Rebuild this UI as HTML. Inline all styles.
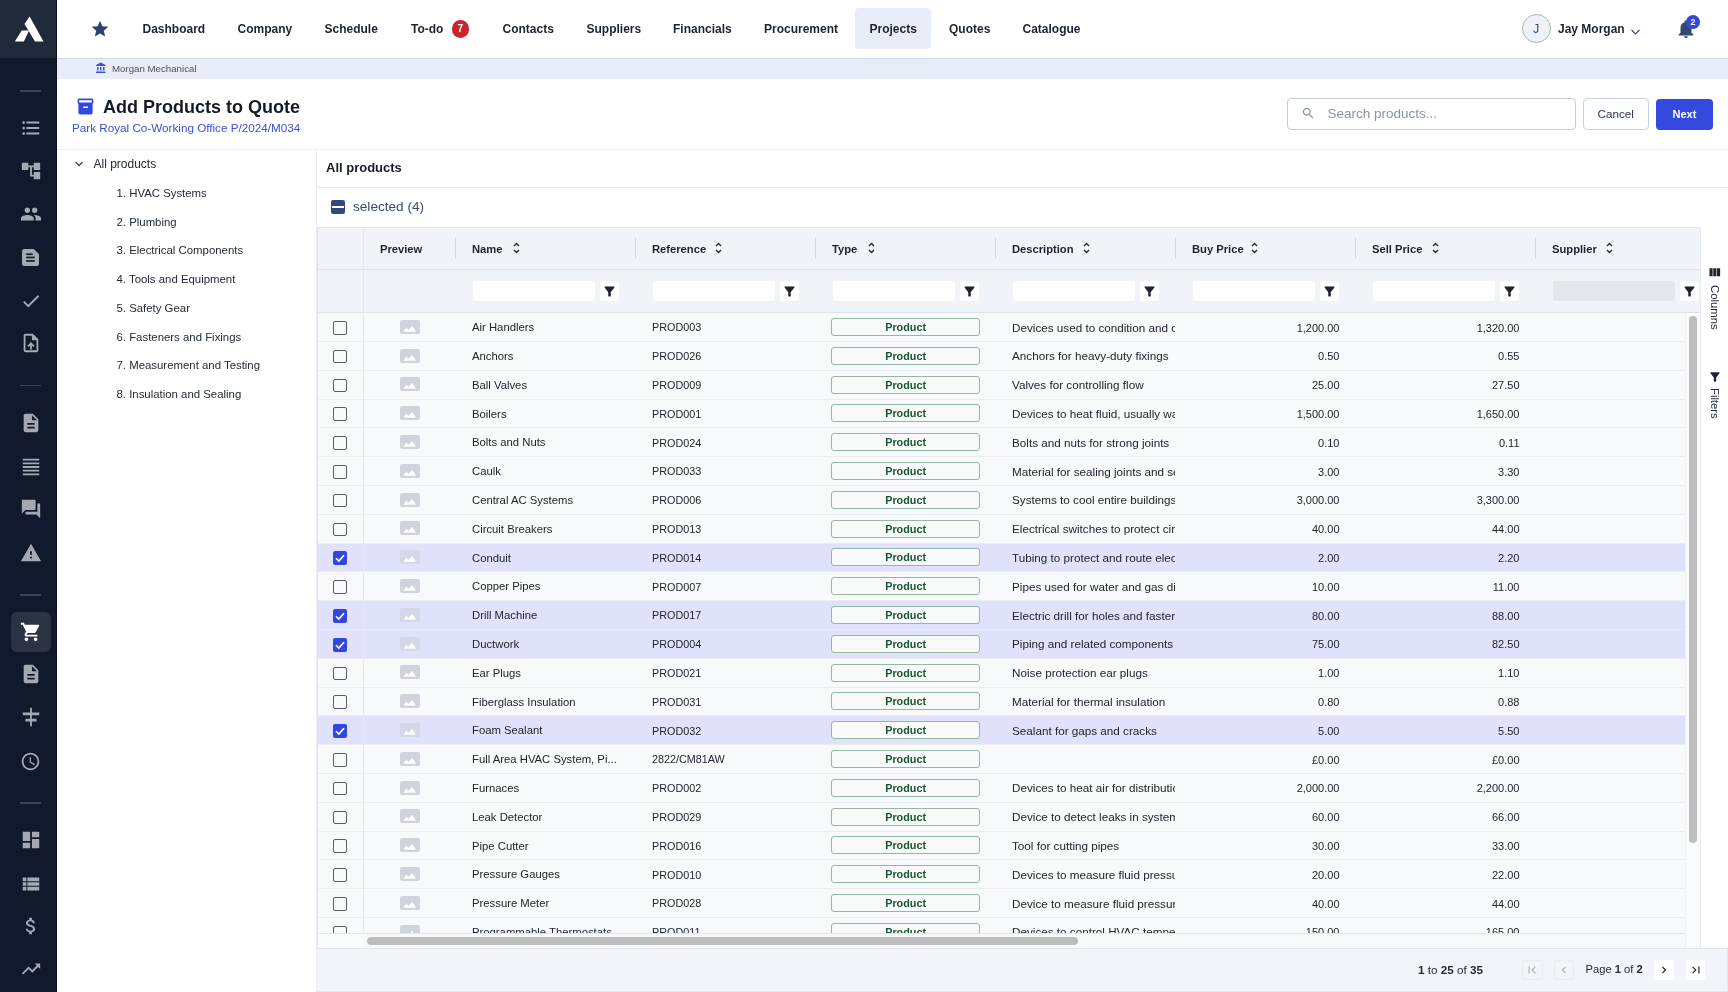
<!DOCTYPE html><html><head><meta charset="utf-8"><style>
*{box-sizing:border-box;margin:0;padding:0}
html,body{width:1728px;height:992px;overflow:hidden;background:#fff;font-family:"Liberation Sans", sans-serif;color:#1f2733}
body{will-change:transform}
.abs{position:absolute}
.t{position:absolute;white-space:nowrap;line-height:1}
</style></head><body>
<div class="abs" style="left:0;top:0;width:57px;height:992px;background:#111a2d"></div>
<div class="abs" style="left:0;top:0;width:57px;height:57.8px;background:#212a3a"></div>
<div class="abs" style="left:56px;top:0;width:1px;height:992px;background:#0a0f1c"></div>
<svg class="abs" style="left:0;top:0" width="57" height="57" viewBox="0 0 57 57"><path fill="#fff" d="M29.6 16.6 L43.5 41.6 L35 41.6 L24.5 23.9 Z"/><path fill="#fff" d="M21.7 30.4 L29 30.4 L23.9 41.6 L14.8 41.6 Z"/></svg>
<div class="abs" style="left:20px;top:90px;width:21px;height:1.5px;background:#3a4254"></div>
<svg style="position:absolute;left:19.6px;top:116.5px" width="22" height="22" viewBox="0 0 24 24"><path fill="#a3a8b2" d="M4 10.5c-.83 0-1.5.67-1.5 1.5s.67 1.5 1.5 1.5 1.5-.67 1.5-1.5-.67-1.5-1.5-1.5zm0-6c-.83 0-1.5.67-1.5 1.5S3.17 7.5 4 7.5 5.5 6.83 5.5 6 4.83 4.5 4 4.5zm0 12c-.83 0-1.5.68-1.5 1.5s.68 1.5 1.5 1.5 1.5-.68 1.5-1.5-.67-1.5-1.5-1.5zM7 19h14v-2H7v2zm0-6h14v-2H7v2zm0-8v2h14V5H7z"/></svg>
<svg style="position:absolute;left:19.6px;top:159.5px" width="22" height="22" viewBox="0 0 24 24"><path fill="#a3a8b2" d="M22 11V3h-7v3H9V3H2v8h7V8h2v10h4v3h7v-8h-7v3h-2V8h2v3z"/></svg>
<svg style="position:absolute;left:19.6px;top:203.0px" width="22" height="22" viewBox="0 0 24 24"><path fill="#a3a8b2" d="M16 11c1.66 0 2.99-1.34 2.99-3S17.66 5 16 5c-1.66 0-3 1.34-3 3s1.34 3 3 3zm-8 0c1.66 0 2.99-1.34 2.99-3S9.66 5 8 5C6.34 5 5 6.34 5 8s1.34 3 3 3zm0 2c-2.33 0-7 1.17-7 3.5V19h14v-2.5c0-2.33-4.67-3.5-7-3.5zm8 0c-.29 0-.62.02-.97.05 1.16.84 1.97 1.97 1.97 3.45V19h6v-2.5c0-2.33-4.67-3.5-7-3.5z"/></svg>
<svg class="abs" style="left:22.2px;top:248.5px" width="17" height="17" viewBox="0 0 17 17"><path fill="#a3a8b2" d="M2.2 0 H11.8 L17 5.2 V14.8 Q17 17 14.8 17 H2.2 Q0 17 0 14.8 V2.2 Q0 0 2.2 0 Z"/><rect x="4.2" y="4.4" width="6.5" height="1.7" fill="#111a2d"/><rect x="4.2" y="7.6" width="8.6" height="1.7" fill="#111a2d"/><rect x="4.2" y="11.1" width="8.6" height="1.7" fill="#111a2d"/></svg>
<svg style="position:absolute;left:19.6px;top:289.5px" width="22" height="22" viewBox="0 0 24 24"><path fill="#a3a8b2" d="M9 16.17L4.83 12l-1.42 1.41L9 19 21 7l-1.41-1.41z"/></svg>
<svg style="position:absolute;left:19.6px;top:332.0px" width="22" height="22" viewBox="0 0 24 24"><path fill="#a3a8b2" d="M14 2H6c-1.1 0-1.99.9-1.99 2L4 20c0 1.1.89 2 1.99 2H18c1.1 0 2-.9 2-2V8l-6-6zm4 18H6V4h7v5h5v11zM8 15.01l1.41 1.41L11 14.84V19h2v-4.16l1.59 1.59L16 15.01 12.01 11z"/></svg>
<div class="abs" style="left:20px;top:384.5px;width:21px;height:1.5px;background:#3a4254"></div>
<svg style="position:absolute;left:19.6px;top:411.5px" width="22" height="22" viewBox="0 0 24 24"><path fill="#a3a8b2" d="M14 2H6c-1.1 0-1.99.9-1.99 2L4 20c0 1.1.89 2 1.99 2H18c1.1 0 2-.9 2-2V8l-6-6zm2 16H8v-2h8v2zm0-4H8v-2h8v2zm-3-5V3.5L18.5 9H13z"/></svg>
<svg style="position:absolute;left:19.6px;top:455.5px" width="22" height="22" viewBox="0 0 24 24"><path fill="#a3a8b2" d="M3 21h18v-2H3v2zm0-4h18v-2H3v2zm0-4h18v-2H3v2zm0-4h18V7H3v2zm0-6v2h18V3H3z"/></svg>
<svg style="position:absolute;left:19.6px;top:498.0px" width="22" height="22" viewBox="0 0 24 24"><path fill="#a3a8b2" d="M21 6h-2v9H6v2c0 .55.45 1 1 1h11l4 4V7c0-.55-.45-1-1-1zm-4 6V3c0-.55-.45-1-1-1H3c-.55 0-1 .45-1 1v14l4-4h10c.55 0 1-.45 1-1z"/></svg>
<svg style="position:absolute;left:19.6px;top:541.5px" width="22" height="22" viewBox="0 0 24 24"><path fill="#a3a8b2" d="M1 21h22L12 2 1 21zm12-3h-2v-2h2v2zm0-4h-2v-4h2v4z"/></svg>
<div class="abs" style="left:20px;top:594px;width:21px;height:1.5px;background:#3a4254"></div>
<div class="abs" style="left:11px;top:612px;width:39.5px;height:40px;border-radius:6px;background:#2b3344"></div>
<svg style="position:absolute;left:19.6px;top:621.0px" width="22" height="22" viewBox="0 0 24 24"><path fill="#ffffff" d="M7 18c-1.1 0-1.99.9-1.99 2S5.9 22 7 22s2-.9 2-2-.9-2-2-2zM1 2v2h2l3.6 7.59-1.35 2.45c-.16.28-.25.61-.25.96 0 1.1.9 2 2 2h12v-2H7.42c-.14 0-.25-.11-.25-.25l.03-.12.9-1.63h7.45c.75 0 1.41-.41 1.750-1.03l3.58-6.49c.08-.14.12-.31.12-.48 0-.55-.45-1-1-1H5.21l-.94-2H1zm16 16c-1.1 0-1.99.9-1.99 2s.89 2 1.99 2 2-.9 2-2-.9-2-2-2z"/></svg>
<svg style="position:absolute;left:19.6px;top:663.0px" width="22" height="22" viewBox="0 0 24 24"><path fill="#a3a8b2" d="M14 2H6c-1.1 0-1.99.9-1.99 2L4 20c0 1.1.89 2 1.99 2H18c1.1 0 2-.9 2-2V8l-6-6zm2 16H8v-2h8v2zm0-4H8v-2h8v2zm-3-5V3.5L18.5 9H13z"/></svg>
<svg style="position:absolute;left:19.6px;top:706.0px" width="22" height="22" viewBox="0 0 24 24"><path fill="#a3a8b2" d="M11 2h2v5h8v3h-8v4h5v3h-5v5h-2v-5H6v-3h5v-4H3V7h8z"/></svg>
<svg style="position:absolute;left:20.1px;top:750.5px" width="21" height="21" viewBox="0 0 24 24"><path fill="#a3a8b2" d="M11.99 2C6.47 2 2 6.48 2 12s4.47 10 9.99 10C17.52 22 22 17.52 22 12S17.52 2 11.99 2zM12 20c-4.42 0-8-3.58-8-8s3.58-8 8-8 8 3.58 8 8-3.58 8-8 8zm.5-13H11v6l5.25 3.150.75-1.23-4.5-2.67z"/></svg>
<div class="abs" style="left:20px;top:802px;width:21px;height:1.5px;background:#3a4254"></div>
<svg style="position:absolute;left:19.6px;top:829.0px" width="22" height="22" viewBox="0 0 24 24"><path fill="#a3a8b2" d="M3 13h8V3H3v10zm0 8h8v-6H3v6zm10 0h8V11h-8v10zm0-18v6h8V3h-8z"/></svg>
<svg style="position:absolute;left:19.6px;top:873.0px" width="22" height="22" viewBox="0 0 24 24"><path fill="#a3a8b2" d="M3 14h4v-4H3v4zm0 5h4v-4H3v4zM3 9h4V5H3v4zm5 5h13v-4H8v4zm0 5h13v-4H8v4zM8 5v4h13V5H8z"/></svg>
<svg style="position:absolute;left:19.6px;top:915.0px" width="22" height="22" viewBox="0 0 24 24"><path fill="#a3a8b2" d="M11.8 10.9c-2.27-.59-3-1.2-3-2.15 0-1.09 1.01-1.850 2.7-1.85 1.78 0 2.44.85 2.5 2.1h2.21c-.07-1.72-1.12-3.3-3.21-3.81V3h-3v2.16c-1.94.42-3.5 1.68-3.5 3.61 0 2.31 1.91 3.46 4.7 4.13 2.5.6 3 1.48 3 2.41 0 .69-.49 1.79-2.7 1.79-2.06 0-2.87-.92-2.98-2.1h-2.2c.12 2.19 1.76 3.42 3.68 3.83V21h3v-2.15c1.95-.37 3.5-1.5 3.5-3.55 0-2.84-2.43-3.81-4.7-4.4z"/></svg>
<svg style="position:absolute;left:19.6px;top:958.0px" width="22" height="22" viewBox="0 0 24 24"><path fill="#a3a8b2" d="M16 6l2.29 2.29-4.88 4.88-4-4L2 16.59 3.41 18l6-6 4 4 6.3-6.29L22 12V6z"/></svg>
<div class="abs" style="left:57px;top:57.8px;width:1671px;height:1px;background:#cfd5e6"></div>
<svg style="position:absolute;left:89.6px;top:18.8px" width="20" height="20" viewBox="0 0 24 24"><path fill="#2c4372" d="M12 17.27L18.18 21l-1.64-7.03L22 9.24l-7.19-.61L12 2 9.19 8.63 2 9.24l5.46 4.73L5.82 21z"/></svg>
<div class="abs" style="left:855px;top:8px;width:75.5px;height:41px;border-radius:4px;background:#e8ebf8"></div>
<div class="t" style="left:142.5px;top:22.6px;font-size:12px;font-weight:700;color:#1d2430">Dashboard</div>
<div class="t" style="left:237.5px;top:22.6px;font-size:12px;font-weight:700;color:#1d2430">Company</div>
<div class="t" style="left:324.5px;top:22.6px;font-size:12px;font-weight:700;color:#1d2430">Schedule</div>
<div class="t" style="left:411px;top:22.6px;font-size:12px;font-weight:700;color:#1d2430">To-do</div>
<div class="t" style="left:502.5px;top:22.6px;font-size:12px;font-weight:700;color:#1d2430">Contacts</div>
<div class="t" style="left:586.5px;top:22.6px;font-size:12px;font-weight:700;color:#1d2430">Suppliers</div>
<div class="t" style="left:673px;top:22.6px;font-size:12px;font-weight:700;color:#1d2430">Financials</div>
<div class="t" style="left:764px;top:22.6px;font-size:12px;font-weight:700;color:#1d2430">Procurement</div>
<div class="t" style="left:869.5px;top:22.6px;font-size:12px;font-weight:700;color:#1d2430">Projects</div>
<div class="t" style="left:949px;top:22.6px;font-size:12px;font-weight:700;color:#1d2430">Quotes</div>
<div class="t" style="left:1022.5px;top:22.6px;font-size:12px;font-weight:700;color:#1d2430">Catalogue</div>
<div class="abs" style="left:451.5px;top:20px;width:17.5px;height:17.5px;border-radius:50%;background:#c8242b;color:#fff;font-size:10px;font-weight:700;text-align:center;line-height:17.5px">7</div>
<div class="abs" style="left:1521.5px;top:14px;width:29px;height:29px;border-radius:50%;border:1px solid #9cbfa9;background:#eef1f5;color:#3a4a6a;font-size:12.5px;text-align:center;line-height:28px">J</div>
<div class="t" style="left:1558px;top:22.6px;font-size:12px;font-weight:700;color:#1d2430">Jay Morgan</div>
<svg class="abs" style="left:1629.5px;top:27.5px" width="11" height="8" viewBox="0 0 11 8"><path d="M1.5 2 L5.5 6 L9.5 2" fill="none" stroke="#34496f" stroke-width="1.1"/></svg>
<svg style="position:absolute;left:1675px;top:18.2px" width="22" height="22" viewBox="0 0 24 24"><path fill="#34496f" d="M12 22c1.1 0 2-.9 2-2h-4c0 1.1.89 2 2 2zm6-6v-5c0-3.07-1.64-5.64-4.5-6.32V4c0-.83-.67-1.5-1.5-1.5s-1.5.67-1.5 1.5v.68C7.630 5.36 6 7.92 6 11v5l-2 2v1h16v-1l-2-2z"/></svg>
<div class="abs" style="left:1686px;top:14.5px;width:14.2px;height:14.2px;border-radius:50%;background:#3247dc;color:#fff;font-size:9px;font-weight:700;text-align:center;line-height:14.2px">2</div>
<div class="abs" style="left:57px;top:58.8px;width:1671px;height:19.9px;background:#e8ebf8"></div>
<svg style="position:absolute;left:95px;top:62px" width="12" height="12" viewBox="0 0 24 24"><path fill="#3b50d8" d="M4 10v7h3v-7H4zm6 0v7h3v-7h-3zM2 22h19v-3H2v3zm14-12v7h3v-7h-3zm-4.5-9L2 6v2h19V6l-9.5-5z"/></svg>
<div class="t" style="left:112px;top:63.6px;font-size:9.7px;color:#4b5361">Morgan Mechanical</div>
<svg style="position:absolute;left:75.5px;top:97px" width="19" height="19" viewBox="0 0 24 24"><path fill="#3448d9" d="M20 2H4c-1 0-2 .9-2 2v3.01c0 .72.43 1.34 1 1.69V20c0 1.1 1.1 2 2 2h14c.9 0 2-.9 2-2V8.7c.57-.35 1-.97 1-1.69V4c0-1.1-1-2-2-2zm-5 12H9v-2h6v2zm5-7H4V4l16-.02V7z"/></svg>
<div class="t" style="left:103px;top:98.2px;font-size:18px;font-weight:700;color:#151b26">Add Products to Quote</div>
<div class="t" style="left:72px;top:121.5px;font-size:11.7px;color:#3a4fd8">Park Royal Co-Working Office P/2024/M034</div>
<div class="abs" style="left:1287px;top:98px;width:288.5px;height:32px;border:1px solid #c6ccd6;border-radius:4px;background:#fff"></div>
<svg style="position:absolute;left:1301px;top:106.3px" width="14.5" height="14.5" viewBox="0 0 24 24"><path fill="#8a93a1" d="M15.5 14h-.79l-.28-.27C15.41 12.59 16 11.11 16 9.5 16 5.91 13.09 3 9.5 3S3 5.91 3 9.5 5.91 16 9.5 16c1.61 0 3.09-.59 4.23-1.57l.27.28v.79l5 4.99L20.49 19l-4.99-5zm-6 0C7.01 14 5 11.99 5 9.5S7.01 5 9.5 5 14 7.01 14 9.5 11.99 14 9.5 14z"/></svg>
<div class="t" style="left:1327.5px;top:107px;font-size:13.5px;color:#8a93a2">Search products...</div>
<div class="abs" style="left:1582.5px;top:98px;width:66.5px;height:32px;border:1px solid #c8cfe8;border-radius:4px;background:#fff"></div>
<div class="t" style="left:1597.5px;top:107.5px;font-size:11.7px;color:#263759">Cancel</div>
<div class="abs" style="left:1656px;top:98.5px;width:57px;height:31px;border-radius:4px;background:#3549df"></div>
<div class="t" style="left:1672.5px;top:109px;font-size:11px;font-weight:700;color:#fff">Next</div>
<div class="abs" style="left:57px;top:149px;width:1671px;height:1px;background:#eceff4"></div>
<div class="abs" style="left:316px;top:150px;width:1px;height:842px;background:#eceff5"></div>
<svg class="abs" style="left:74px;top:160px" width="10" height="8" viewBox="0 0 10 8"><path d="M1.5 2 L5 5.5 L8.5 2" fill="none" stroke="#3b4454" stroke-width="1.3"/></svg>
<div class="t" style="left:93.5px;top:158.2px;font-size:12px;color:#222a36">All products</div>
<div class="t" style="left:116.5px;top:187.8px;font-size:11.4px;color:#222a36">1. HVAC Systems</div>
<div class="t" style="left:116.5px;top:216.55px;font-size:11.4px;color:#222a36">2. Plumbing</div>
<div class="t" style="left:116.5px;top:245.3px;font-size:11.4px;color:#222a36">3. Electrical Components</div>
<div class="t" style="left:116.5px;top:274.05px;font-size:11.4px;color:#222a36">4. Tools and Equipment</div>
<div class="t" style="left:116.5px;top:302.8px;font-size:11.4px;color:#222a36">5. Safety Gear</div>
<div class="t" style="left:116.5px;top:331.55px;font-size:11.4px;color:#222a36">6. Fasteners and Fixings</div>
<div class="t" style="left:116.5px;top:360.3px;font-size:11.4px;color:#222a36">7. Measurement and Testing</div>
<div class="t" style="left:116.5px;top:389.05px;font-size:11.4px;color:#222a36">8. Insulation and Sealing</div>
<div class="t" style="left:326px;top:161px;font-size:13px;font-weight:700;color:#161c27">All products</div>
<div class="abs" style="left:317px;top:187px;width:1411px;height:1px;background:#e3e7ee"></div>
<div class="abs" style="left:331px;top:200px;width:14px;height:14px;border-radius:2px;background:#33497a"></div>
<div class="abs" style="left:332.3px;top:205.8px;width:11.5px;height:2.5px;background:#fff"></div>
<div class="t" style="left:353px;top:200.3px;font-size:13.6px;color:#3a4d70">selected (4)</div>
<div class="abs" style="left:317px;top:227px;width:1383px;height:721px;background:#f0f3f8;border-top:1px solid #dfe4ec;border-left:1px solid #dfe4ec"></div>
<div class="abs" style="left:317px;top:269px;width:1383px;height:1px;background:#dfe4ec"></div>
<div class="abs" style="left:317px;top:312px;width:1383px;height:1px;background:#dfe4ec"></div>
<div class="abs" style="left:363px;top:228px;width:1px;height:705px;background:#e3e7ee"></div>
<div class="t" style="left:380px;top:243.5px;font-size:11.2px;font-weight:700;color:#1b2230">Preview</div>
<div class="t" style="left:472px;top:243.5px;font-size:11.2px;font-weight:700;color:#1b2230">Name</div>
<div class="abs" style="left:455px;top:237.5px;width:1px;height:21.5px;background:#d3d9e2"></div>
<div class="t" style="left:652px;top:243.5px;font-size:11.2px;font-weight:700;color:#1b2230">Reference</div>
<div class="abs" style="left:635px;top:237.5px;width:1px;height:21.5px;background:#d3d9e2"></div>
<div class="t" style="left:832px;top:243.5px;font-size:11.2px;font-weight:700;color:#1b2230">Type</div>
<div class="abs" style="left:815px;top:237.5px;width:1px;height:21.5px;background:#d3d9e2"></div>
<div class="t" style="left:1012px;top:243.5px;font-size:11.2px;font-weight:700;color:#1b2230">Description</div>
<div class="abs" style="left:995px;top:237.5px;width:1px;height:21.5px;background:#d3d9e2"></div>
<div class="t" style="left:1192px;top:243.5px;font-size:11.2px;font-weight:700;color:#1b2230">Buy Price</div>
<div class="abs" style="left:1175px;top:237.5px;width:1px;height:21.5px;background:#d3d9e2"></div>
<div class="t" style="left:1372px;top:243.5px;font-size:11.2px;font-weight:700;color:#1b2230">Sell Price</div>
<div class="abs" style="left:1355px;top:237.5px;width:1px;height:21.5px;background:#d3d9e2"></div>
<div class="t" style="left:1552px;top:243.5px;font-size:11.2px;font-weight:700;color:#1b2230">Supplier</div>
<div class="abs" style="left:1535px;top:237.5px;width:1px;height:21.5px;background:#d3d9e2"></div>
<svg class="abs" style="left:512.5px;top:242px" width="7" height="12" viewBox="0 0 7 12"><path d="M1 4 L3.5 1.5 L6 4 M1 8 L3.5 10.5 L6 8" fill="none" stroke="#1f2733" stroke-width="1.3"/></svg>
<svg class="abs" style="left:714.5px;top:242px" width="7" height="12" viewBox="0 0 7 12"><path d="M1 4 L3.5 1.5 L6 4 M1 8 L3.5 10.5 L6 8" fill="none" stroke="#1f2733" stroke-width="1.3"/></svg>
<svg class="abs" style="left:867.5px;top:242px" width="7" height="12" viewBox="0 0 7 12"><path d="M1 4 L3.5 1.5 L6 4 M1 8 L3.5 10.5 L6 8" fill="none" stroke="#1f2733" stroke-width="1.3"/></svg>
<svg class="abs" style="left:1082.5px;top:242px" width="7" height="12" viewBox="0 0 7 12"><path d="M1 4 L3.5 1.5 L6 4 M1 8 L3.5 10.5 L6 8" fill="none" stroke="#1f2733" stroke-width="1.3"/></svg>
<svg class="abs" style="left:1251px;top:242px" width="7" height="12" viewBox="0 0 7 12"><path d="M1 4 L3.5 1.5 L6 4 M1 8 L3.5 10.5 L6 8" fill="none" stroke="#1f2733" stroke-width="1.3"/></svg>
<svg class="abs" style="left:1431.5px;top:242px" width="7" height="12" viewBox="0 0 7 12"><path d="M1 4 L3.5 1.5 L6 4 M1 8 L3.5 10.5 L6 8" fill="none" stroke="#1f2733" stroke-width="1.3"/></svg>
<svg class="abs" style="left:1606px;top:242px" width="7" height="12" viewBox="0 0 7 12"><path d="M1 4 L3.5 1.5 L6 4 M1 8 L3.5 10.5 L6 8" fill="none" stroke="#1f2733" stroke-width="1.3"/></svg>
<div class="abs" style="left:472.5px;top:281px;width:122px;height:20px;border-radius:3px;background:#fff"></div>
<div class="abs" style="left:600px;top:281px;width:19px;height:20px;border-radius:3px;background:#fff"></div>
<svg style="position:absolute;left:602px;top:283.5px" width="15" height="15" viewBox="0 0 24 24"><path fill="#1b2230" d="M4.25 5.61C6.27 8.2 10 13 10 13v6c0 .55.45 1 1 1h2c.55 0 1-.45 1-1v-6s3.72-4.8 5.74-7.39c.51-.66.04-1.61-.79-1.61H5.04c-.83 0-1.3.95-.79 1.61z"/></svg>
<div class="abs" style="left:652.5px;top:281px;width:122px;height:20px;border-radius:3px;background:#fff"></div>
<div class="abs" style="left:780px;top:281px;width:19px;height:20px;border-radius:3px;background:#fff"></div>
<svg style="position:absolute;left:782px;top:283.5px" width="15" height="15" viewBox="0 0 24 24"><path fill="#1b2230" d="M4.25 5.61C6.27 8.2 10 13 10 13v6c0 .55.45 1 1 1h2c.55 0 1-.45 1-1v-6s3.72-4.8 5.74-7.39c.51-.66.04-1.61-.79-1.61H5.04c-.83 0-1.3.95-.79 1.61z"/></svg>
<div class="abs" style="left:832.5px;top:281px;width:122px;height:20px;border-radius:3px;background:#fff"></div>
<div class="abs" style="left:960px;top:281px;width:19px;height:20px;border-radius:3px;background:#fff"></div>
<svg style="position:absolute;left:962px;top:283.5px" width="15" height="15" viewBox="0 0 24 24"><path fill="#1b2230" d="M4.25 5.61C6.27 8.2 10 13 10 13v6c0 .55.45 1 1 1h2c.55 0 1-.45 1-1v-6s3.72-4.8 5.74-7.39c.51-.66.04-1.61-.79-1.61H5.04c-.83 0-1.3.95-.79 1.61z"/></svg>
<div class="abs" style="left:1012.5px;top:281px;width:122px;height:20px;border-radius:3px;background:#fff"></div>
<div class="abs" style="left:1140px;top:281px;width:19px;height:20px;border-radius:3px;background:#fff"></div>
<svg style="position:absolute;left:1142px;top:283.5px" width="15" height="15" viewBox="0 0 24 24"><path fill="#1b2230" d="M4.25 5.61C6.27 8.2 10 13 10 13v6c0 .55.45 1 1 1h2c.55 0 1-.45 1-1v-6s3.72-4.8 5.74-7.39c.51-.66.04-1.61-.79-1.61H5.04c-.83 0-1.3.95-.79 1.61z"/></svg>
<div class="abs" style="left:1192.5px;top:281px;width:122px;height:20px;border-radius:3px;background:#fff"></div>
<div class="abs" style="left:1320px;top:281px;width:19px;height:20px;border-radius:3px;background:#fff"></div>
<svg style="position:absolute;left:1322px;top:283.5px" width="15" height="15" viewBox="0 0 24 24"><path fill="#1b2230" d="M4.25 5.61C6.27 8.2 10 13 10 13v6c0 .55.45 1 1 1h2c.55 0 1-.45 1-1v-6s3.72-4.8 5.74-7.39c.51-.66.04-1.61-.79-1.61H5.04c-.83 0-1.3.95-.79 1.61z"/></svg>
<div class="abs" style="left:1372.5px;top:281px;width:122px;height:20px;border-radius:3px;background:#fff"></div>
<div class="abs" style="left:1500px;top:281px;width:19px;height:20px;border-radius:3px;background:#fff"></div>
<svg style="position:absolute;left:1502px;top:283.5px" width="15" height="15" viewBox="0 0 24 24"><path fill="#1b2230" d="M4.25 5.61C6.27 8.2 10 13 10 13v6c0 .55.45 1 1 1h2c.55 0 1-.45 1-1v-6s3.72-4.8 5.74-7.39c.51-.66.04-1.61-.79-1.61H5.04c-.83 0-1.3.95-.79 1.61z"/></svg>
<div class="abs" style="left:1552.5px;top:281px;width:122px;height:20px;border-radius:3px;background:#e3e6eb"></div>
<div class="abs" style="left:1680px;top:281px;width:19px;height:20px;border-radius:3px;background:#fff"></div>
<svg style="position:absolute;left:1682px;top:283.5px" width="15" height="15" viewBox="0 0 24 24"><path fill="#1b2230" d="M4.25 5.61C6.27 8.2 10 13 10 13v6c0 .55.45 1 1 1h2c.55 0 1-.45 1-1v-6s3.72-4.8 5.74-7.39c.51-.66.04-1.61-.79-1.61H5.04c-.83 0-1.3.95-.79 1.61z"/></svg>
<div class="abs" style="left:318px;top:313px;width:1367px;height:620px;overflow:hidden;background:#f7f9fb">
<div class="abs" style="left:0;top:0.19999999999998863px;width:1367px;height:28.8px;background:#f7f9fb;border-bottom:1px solid #e9ecf1"></div>
<div class="abs" style="left:15px;top:7.999999999999989px;width:13.5px;height:13.5px;border-radius:2px;border:1.8px solid #575d69;background:transparent"></div>
<svg class="abs" style="left:82px;top:6.799999999999989px" width="20" height="14" viewBox="0 0 20 14"><rect width="20" height="14" rx="2" fill="#cfd4dc"/><path d="M3.8 11.4 L6.4 7.9 L8.4 10.2 L12 6.2 L15.7 11.4 Z" fill="#fff" stroke="#fff" stroke-width="0.5" stroke-linejoin="round"/></svg>
<div class="t" style="left:154px;top:9.099999999999989px;font-size:11.3px;color:#20262f">Air Handlers</div>
<div class="t" style="left:334px;top:9.29999999999999px;font-size:10.8px;color:#20262f">PROD003</div>
<div class="abs" style="left:513.2px;top:4.999999999999989px;width:148.8px;height:18px;border:1px solid #93b9a6;border-radius:3px;background:#f8fafa;color:#1a5431;font-size:10.8px;font-weight:700;text-align:center;line-height:16.5px">Product</div>
<div class="abs" style="left:694px;top:6.599999999999989px;width:163px;height:16px;overflow:hidden"><div class="t" style="left:0;top:2.0px;font-size:11.7px;color:#20262f">Devices used to condition and circulate air</div></div>
<div class="t" style="right:345.5px;top:9.49999999999999px;font-size:11px;color:#20262f">1,200.00</div>
<div class="t" style="right:165.5px;top:9.49999999999999px;font-size:11px;color:#20262f">1,320.00</div>
<div class="abs" style="left:0;top:28.99999999999999px;width:1367px;height:28.8px;background:#f7f9fb;border-bottom:1px solid #e9ecf1"></div>
<div class="abs" style="left:15px;top:36.79999999999999px;width:13.5px;height:13.5px;border-radius:2px;border:1.8px solid #575d69;background:transparent"></div>
<svg class="abs" style="left:82px;top:35.599999999999994px" width="20" height="14" viewBox="0 0 20 14"><rect width="20" height="14" rx="2" fill="#cfd4dc"/><path d="M3.8 11.4 L6.4 7.9 L8.4 10.2 L12 6.2 L15.7 11.4 Z" fill="#fff" stroke="#fff" stroke-width="0.5" stroke-linejoin="round"/></svg>
<div class="t" style="left:154px;top:37.89999999999999px;font-size:11.3px;color:#20262f">Anchors</div>
<div class="t" style="left:334px;top:38.099999999999994px;font-size:10.8px;color:#20262f">PROD026</div>
<div class="abs" style="left:513.2px;top:33.79999999999999px;width:148.8px;height:18px;border:1px solid #93b9a6;border-radius:3px;background:#f8fafa;color:#1a5431;font-size:10.8px;font-weight:700;text-align:center;line-height:16.5px">Product</div>
<div class="abs" style="left:694px;top:35.39999999999999px;width:163px;height:16px;overflow:hidden"><div class="t" style="left:0;top:2.0px;font-size:11.7px;color:#20262f">Anchors for heavy-duty fixings</div></div>
<div class="t" style="right:345.5px;top:38.29999999999999px;font-size:11px;color:#20262f">0.50</div>
<div class="t" style="right:165.5px;top:38.29999999999999px;font-size:11px;color:#20262f">0.55</div>
<div class="abs" style="left:0;top:57.79999999999999px;width:1367px;height:28.8px;background:#f7f9fb;border-bottom:1px solid #e9ecf1"></div>
<div class="abs" style="left:15px;top:65.6px;width:13.5px;height:13.5px;border-radius:2px;border:1.8px solid #575d69;background:transparent"></div>
<svg class="abs" style="left:82px;top:64.39999999999999px" width="20" height="14" viewBox="0 0 20 14"><rect width="20" height="14" rx="2" fill="#cfd4dc"/><path d="M3.8 11.4 L6.4 7.9 L8.4 10.2 L12 6.2 L15.7 11.4 Z" fill="#fff" stroke="#fff" stroke-width="0.5" stroke-linejoin="round"/></svg>
<div class="t" style="left:154px;top:66.69999999999999px;font-size:11.3px;color:#20262f">Ball Valves</div>
<div class="t" style="left:334px;top:66.89999999999999px;font-size:10.8px;color:#20262f">PROD009</div>
<div class="abs" style="left:513.2px;top:62.59999999999999px;width:148.8px;height:18px;border:1px solid #93b9a6;border-radius:3px;background:#f8fafa;color:#1a5431;font-size:10.8px;font-weight:700;text-align:center;line-height:16.5px">Product</div>
<div class="abs" style="left:694px;top:64.19999999999999px;width:163px;height:16px;overflow:hidden"><div class="t" style="left:0;top:2.0px;font-size:11.7px;color:#20262f">Valves for controlling flow</div></div>
<div class="t" style="right:345.5px;top:67.1px;font-size:11px;color:#20262f">25.00</div>
<div class="t" style="right:165.5px;top:67.1px;font-size:11px;color:#20262f">27.50</div>
<div class="abs" style="left:0;top:86.6px;width:1367px;height:28.8px;background:#f7f9fb;border-bottom:1px solid #e9ecf1"></div>
<div class="abs" style="left:15px;top:94.4px;width:13.5px;height:13.5px;border-radius:2px;border:1.8px solid #575d69;background:transparent"></div>
<svg class="abs" style="left:82px;top:93.2px" width="20" height="14" viewBox="0 0 20 14"><rect width="20" height="14" rx="2" fill="#cfd4dc"/><path d="M3.8 11.4 L6.4 7.9 L8.4 10.2 L12 6.2 L15.7 11.4 Z" fill="#fff" stroke="#fff" stroke-width="0.5" stroke-linejoin="round"/></svg>
<div class="t" style="left:154px;top:95.5px;font-size:11.3px;color:#20262f">Boilers</div>
<div class="t" style="left:334px;top:95.7px;font-size:10.8px;color:#20262f">PROD001</div>
<div class="abs" style="left:513.2px;top:91.4px;width:148.8px;height:18px;border:1px solid #93b9a6;border-radius:3px;background:#f8fafa;color:#1a5431;font-size:10.8px;font-weight:700;text-align:center;line-height:16.5px">Product</div>
<div class="abs" style="left:694px;top:93.0px;width:163px;height:16px;overflow:hidden"><div class="t" style="left:0;top:2.0px;font-size:11.7px;color:#20262f">Devices to heat fluid, usually water</div></div>
<div class="t" style="right:345.5px;top:95.9px;font-size:11px;color:#20262f">1,500.00</div>
<div class="t" style="right:165.5px;top:95.9px;font-size:11px;color:#20262f">1,650.00</div>
<div class="abs" style="left:0;top:115.39999999999999px;width:1367px;height:28.8px;background:#f7f9fb;border-bottom:1px solid #e9ecf1"></div>
<div class="abs" style="left:15px;top:123.19999999999999px;width:13.5px;height:13.5px;border-radius:2px;border:1.8px solid #575d69;background:transparent"></div>
<svg class="abs" style="left:82px;top:121.99999999999999px" width="20" height="14" viewBox="0 0 20 14"><rect width="20" height="14" rx="2" fill="#cfd4dc"/><path d="M3.8 11.4 L6.4 7.9 L8.4 10.2 L12 6.2 L15.7 11.4 Z" fill="#fff" stroke="#fff" stroke-width="0.5" stroke-linejoin="round"/></svg>
<div class="t" style="left:154px;top:124.29999999999998px;font-size:11.3px;color:#20262f">Bolts and Nuts</div>
<div class="t" style="left:334px;top:124.49999999999999px;font-size:10.8px;color:#20262f">PROD024</div>
<div class="abs" style="left:513.2px;top:120.19999999999999px;width:148.8px;height:18px;border:1px solid #93b9a6;border-radius:3px;background:#f8fafa;color:#1a5431;font-size:10.8px;font-weight:700;text-align:center;line-height:16.5px">Product</div>
<div class="abs" style="left:694px;top:121.79999999999998px;width:163px;height:16px;overflow:hidden"><div class="t" style="left:0;top:2.0px;font-size:11.7px;color:#20262f">Bolts and nuts for strong joints</div></div>
<div class="t" style="right:345.5px;top:124.69999999999999px;font-size:11px;color:#20262f">0.10</div>
<div class="t" style="right:165.5px;top:124.69999999999999px;font-size:11px;color:#20262f">0.11</div>
<div class="abs" style="left:0;top:144.2px;width:1367px;height:28.8px;background:#f7f9fb;border-bottom:1px solid #e9ecf1"></div>
<div class="abs" style="left:15px;top:152.0px;width:13.5px;height:13.5px;border-radius:2px;border:1.8px solid #575d69;background:transparent"></div>
<svg class="abs" style="left:82px;top:150.79999999999998px" width="20" height="14" viewBox="0 0 20 14"><rect width="20" height="14" rx="2" fill="#cfd4dc"/><path d="M3.8 11.4 L6.4 7.9 L8.4 10.2 L12 6.2 L15.7 11.4 Z" fill="#fff" stroke="#fff" stroke-width="0.5" stroke-linejoin="round"/></svg>
<div class="t" style="left:154px;top:153.1px;font-size:11.3px;color:#20262f">Caulk</div>
<div class="t" style="left:334px;top:153.29999999999998px;font-size:10.8px;color:#20262f">PROD033</div>
<div class="abs" style="left:513.2px;top:149.0px;width:148.8px;height:18px;border:1px solid #93b9a6;border-radius:3px;background:#f8fafa;color:#1a5431;font-size:10.8px;font-weight:700;text-align:center;line-height:16.5px">Product</div>
<div class="abs" style="left:694px;top:150.6px;width:163px;height:16px;overflow:hidden"><div class="t" style="left:0;top:2.0px;font-size:11.7px;color:#20262f">Material for sealing joints and seams</div></div>
<div class="t" style="right:345.5px;top:153.5px;font-size:11px;color:#20262f">3.00</div>
<div class="t" style="right:165.5px;top:153.5px;font-size:11px;color:#20262f">3.30</div>
<div class="abs" style="left:0;top:173.0px;width:1367px;height:28.8px;background:#f7f9fb;border-bottom:1px solid #e9ecf1"></div>
<div class="abs" style="left:15px;top:180.8px;width:13.5px;height:13.5px;border-radius:2px;border:1.8px solid #575d69;background:transparent"></div>
<svg class="abs" style="left:82px;top:179.6px" width="20" height="14" viewBox="0 0 20 14"><rect width="20" height="14" rx="2" fill="#cfd4dc"/><path d="M3.8 11.4 L6.4 7.9 L8.4 10.2 L12 6.2 L15.7 11.4 Z" fill="#fff" stroke="#fff" stroke-width="0.5" stroke-linejoin="round"/></svg>
<div class="t" style="left:154px;top:181.9px;font-size:11.3px;color:#20262f">Central AC Systems</div>
<div class="t" style="left:334px;top:182.1px;font-size:10.8px;color:#20262f">PROD006</div>
<div class="abs" style="left:513.2px;top:177.8px;width:148.8px;height:18px;border:1px solid #93b9a6;border-radius:3px;background:#f8fafa;color:#1a5431;font-size:10.8px;font-weight:700;text-align:center;line-height:16.5px">Product</div>
<div class="abs" style="left:694px;top:179.4px;width:163px;height:16px;overflow:hidden"><div class="t" style="left:0;top:2.0px;font-size:11.7px;color:#20262f">Systems to cool entire buildings</div></div>
<div class="t" style="right:345.5px;top:182.3px;font-size:11px;color:#20262f">3,000.00</div>
<div class="t" style="right:165.5px;top:182.3px;font-size:11px;color:#20262f">3,300.00</div>
<div class="abs" style="left:0;top:201.79999999999998px;width:1367px;height:28.8px;background:#f7f9fb;border-bottom:1px solid #e9ecf1"></div>
<div class="abs" style="left:15px;top:209.6px;width:13.5px;height:13.5px;border-radius:2px;border:1.8px solid #575d69;background:transparent"></div>
<svg class="abs" style="left:82px;top:208.39999999999998px" width="20" height="14" viewBox="0 0 20 14"><rect width="20" height="14" rx="2" fill="#cfd4dc"/><path d="M3.8 11.4 L6.4 7.9 L8.4 10.2 L12 6.2 L15.7 11.4 Z" fill="#fff" stroke="#fff" stroke-width="0.5" stroke-linejoin="round"/></svg>
<div class="t" style="left:154px;top:210.7px;font-size:11.3px;color:#20262f">Circuit Breakers</div>
<div class="t" style="left:334px;top:210.89999999999998px;font-size:10.8px;color:#20262f">PROD013</div>
<div class="abs" style="left:513.2px;top:206.6px;width:148.8px;height:18px;border:1px solid #93b9a6;border-radius:3px;background:#f8fafa;color:#1a5431;font-size:10.8px;font-weight:700;text-align:center;line-height:16.5px">Product</div>
<div class="abs" style="left:694px;top:208.2px;width:163px;height:16px;overflow:hidden"><div class="t" style="left:0;top:2.0px;font-size:11.7px;color:#20262f">Electrical switches to protect circuits</div></div>
<div class="t" style="right:345.5px;top:211.1px;font-size:11px;color:#20262f">40.00</div>
<div class="t" style="right:165.5px;top:211.1px;font-size:11px;color:#20262f">44.00</div>
<div class="abs" style="left:0;top:230.6px;width:1367px;height:28.8px;background:#dfe2fa;border-bottom:1px solid #e9ecf1"></div>
<div class="abs" style="left:15px;top:238.4px;width:14px;height:14px;border-radius:2px;background:#3347e0"></div>
<svg class="abs" style="left:15px;top:238.4px" width="14" height="14" viewBox="0 0 14 14"><path d="M3 7.2 L5.8 10 L11 4.2" fill="none" stroke="#fff" stroke-width="1.6"/></svg>
<svg class="abs" style="left:82px;top:237.2px" width="20" height="14" viewBox="0 0 20 14"><rect width="20" height="14" rx="2" fill="#d3d8e8"/><path d="M3.8 11.4 L6.4 7.9 L8.4 10.2 L12 6.2 L15.7 11.4 Z" fill="#fff" stroke="#fff" stroke-width="0.5" stroke-linejoin="round"/></svg>
<div class="t" style="left:154px;top:239.5px;font-size:11.3px;color:#20262f">Conduit</div>
<div class="t" style="left:334px;top:239.7px;font-size:10.8px;color:#20262f">PROD014</div>
<div class="abs" style="left:513.2px;top:235.4px;width:148.8px;height:18px;border:1px solid #93b9a6;border-radius:3px;background:#f8fafa;color:#1a5431;font-size:10.8px;font-weight:700;text-align:center;line-height:16.5px">Product</div>
<div class="abs" style="left:694px;top:237.0px;width:163px;height:16px;overflow:hidden"><div class="t" style="left:0;top:2.0px;font-size:11.7px;color:#20262f">Tubing to protect and route electrical wires</div></div>
<div class="t" style="right:345.5px;top:239.9px;font-size:11px;color:#20262f">2.00</div>
<div class="t" style="right:165.5px;top:239.9px;font-size:11px;color:#20262f">2.20</div>
<div class="abs" style="left:0;top:259.4px;width:1367px;height:28.8px;background:#f7f9fb;border-bottom:1px solid #e9ecf1"></div>
<div class="abs" style="left:15px;top:267.19999999999993px;width:13.5px;height:13.5px;border-radius:2px;border:1.8px solid #575d69;background:transparent"></div>
<svg class="abs" style="left:82px;top:265.99999999999994px" width="20" height="14" viewBox="0 0 20 14"><rect width="20" height="14" rx="2" fill="#cfd4dc"/><path d="M3.8 11.4 L6.4 7.9 L8.4 10.2 L12 6.2 L15.7 11.4 Z" fill="#fff" stroke="#fff" stroke-width="0.5" stroke-linejoin="round"/></svg>
<div class="t" style="left:154px;top:268.29999999999995px;font-size:11.3px;color:#20262f">Copper Pipes</div>
<div class="t" style="left:334px;top:268.49999999999994px;font-size:10.8px;color:#20262f">PROD007</div>
<div class="abs" style="left:513.2px;top:264.19999999999993px;width:148.8px;height:18px;border:1px solid #93b9a6;border-radius:3px;background:#f8fafa;color:#1a5431;font-size:10.8px;font-weight:700;text-align:center;line-height:16.5px">Product</div>
<div class="abs" style="left:694px;top:265.79999999999995px;width:163px;height:16px;overflow:hidden"><div class="t" style="left:0;top:2.0px;font-size:11.7px;color:#20262f">Pipes used for water and gas distribution</div></div>
<div class="t" style="right:345.5px;top:268.69999999999993px;font-size:11px;color:#20262f">10.00</div>
<div class="t" style="right:165.5px;top:268.69999999999993px;font-size:11px;color:#20262f">11.00</div>
<div class="abs" style="left:0;top:288.2px;width:1367px;height:28.8px;background:#dfe2fa;border-bottom:1px solid #e9ecf1"></div>
<div class="abs" style="left:15px;top:295.99999999999994px;width:14px;height:14px;border-radius:2px;background:#3347e0"></div>
<svg class="abs" style="left:15px;top:295.99999999999994px" width="14" height="14" viewBox="0 0 14 14"><path d="M3 7.2 L5.8 10 L11 4.2" fill="none" stroke="#fff" stroke-width="1.6"/></svg>
<svg class="abs" style="left:82px;top:294.79999999999995px" width="20" height="14" viewBox="0 0 20 14"><rect width="20" height="14" rx="2" fill="#d3d8e8"/><path d="M3.8 11.4 L6.4 7.9 L8.4 10.2 L12 6.2 L15.7 11.4 Z" fill="#fff" stroke="#fff" stroke-width="0.5" stroke-linejoin="round"/></svg>
<div class="t" style="left:154px;top:297.09999999999997px;font-size:11.3px;color:#20262f">Drill Machine</div>
<div class="t" style="left:334px;top:297.29999999999995px;font-size:10.8px;color:#20262f">PROD017</div>
<div class="abs" style="left:513.2px;top:292.99999999999994px;width:148.8px;height:18px;border:1px solid #93b9a6;border-radius:3px;background:#f8fafa;color:#1a5431;font-size:10.8px;font-weight:700;text-align:center;line-height:16.5px">Product</div>
<div class="abs" style="left:694px;top:294.59999999999997px;width:163px;height:16px;overflow:hidden"><div class="t" style="left:0;top:2.0px;font-size:11.7px;color:#20262f">Electric drill for holes and fasteners</div></div>
<div class="t" style="right:345.5px;top:297.49999999999994px;font-size:11px;color:#20262f">80.00</div>
<div class="t" style="right:165.5px;top:297.49999999999994px;font-size:11px;color:#20262f">88.00</div>
<div class="abs" style="left:0;top:317.0px;width:1367px;height:28.8px;background:#dfe2fa;border-bottom:1px solid #e9ecf1"></div>
<div class="abs" style="left:15px;top:324.79999999999995px;width:14px;height:14px;border-radius:2px;background:#3347e0"></div>
<svg class="abs" style="left:15px;top:324.79999999999995px" width="14" height="14" viewBox="0 0 14 14"><path d="M3 7.2 L5.8 10 L11 4.2" fill="none" stroke="#fff" stroke-width="1.6"/></svg>
<svg class="abs" style="left:82px;top:323.59999999999997px" width="20" height="14" viewBox="0 0 20 14"><rect width="20" height="14" rx="2" fill="#d3d8e8"/><path d="M3.8 11.4 L6.4 7.9 L8.4 10.2 L12 6.2 L15.7 11.4 Z" fill="#fff" stroke="#fff" stroke-width="0.5" stroke-linejoin="round"/></svg>
<div class="t" style="left:154px;top:325.9px;font-size:11.3px;color:#20262f">Ductwork</div>
<div class="t" style="left:334px;top:326.09999999999997px;font-size:10.8px;color:#20262f">PROD004</div>
<div class="abs" style="left:513.2px;top:321.79999999999995px;width:148.8px;height:18px;border:1px solid #93b9a6;border-radius:3px;background:#f8fafa;color:#1a5431;font-size:10.8px;font-weight:700;text-align:center;line-height:16.5px">Product</div>
<div class="abs" style="left:694px;top:323.4px;width:163px;height:16px;overflow:hidden"><div class="t" style="left:0;top:2.0px;font-size:11.7px;color:#20262f">Piping and related components</div></div>
<div class="t" style="right:345.5px;top:326.29999999999995px;font-size:11px;color:#20262f">75.00</div>
<div class="t" style="right:165.5px;top:326.29999999999995px;font-size:11px;color:#20262f">82.50</div>
<div class="abs" style="left:0;top:345.8px;width:1367px;height:28.8px;background:#f7f9fb;border-bottom:1px solid #e9ecf1"></div>
<div class="abs" style="left:15px;top:353.59999999999997px;width:13.5px;height:13.5px;border-radius:2px;border:1.8px solid #575d69;background:transparent"></div>
<svg class="abs" style="left:82px;top:352.4px" width="20" height="14" viewBox="0 0 20 14"><rect width="20" height="14" rx="2" fill="#cfd4dc"/><path d="M3.8 11.4 L6.4 7.9 L8.4 10.2 L12 6.2 L15.7 11.4 Z" fill="#fff" stroke="#fff" stroke-width="0.5" stroke-linejoin="round"/></svg>
<div class="t" style="left:154px;top:354.7px;font-size:11.3px;color:#20262f">Ear Plugs</div>
<div class="t" style="left:334px;top:354.9px;font-size:10.8px;color:#20262f">PROD021</div>
<div class="abs" style="left:513.2px;top:350.59999999999997px;width:148.8px;height:18px;border:1px solid #93b9a6;border-radius:3px;background:#f8fafa;color:#1a5431;font-size:10.8px;font-weight:700;text-align:center;line-height:16.5px">Product</div>
<div class="abs" style="left:694px;top:352.2px;width:163px;height:16px;overflow:hidden"><div class="t" style="left:0;top:2.0px;font-size:11.7px;color:#20262f">Noise protection ear plugs</div></div>
<div class="t" style="right:345.5px;top:355.09999999999997px;font-size:11px;color:#20262f">1.00</div>
<div class="t" style="right:165.5px;top:355.09999999999997px;font-size:11px;color:#20262f">1.10</div>
<div class="abs" style="left:0;top:374.6px;width:1367px;height:28.8px;background:#f7f9fb;border-bottom:1px solid #e9ecf1"></div>
<div class="abs" style="left:15px;top:382.4px;width:13.5px;height:13.5px;border-radius:2px;border:1.8px solid #575d69;background:transparent"></div>
<svg class="abs" style="left:82px;top:381.2px" width="20" height="14" viewBox="0 0 20 14"><rect width="20" height="14" rx="2" fill="#cfd4dc"/><path d="M3.8 11.4 L6.4 7.9 L8.4 10.2 L12 6.2 L15.7 11.4 Z" fill="#fff" stroke="#fff" stroke-width="0.5" stroke-linejoin="round"/></svg>
<div class="t" style="left:154px;top:383.5px;font-size:11.3px;color:#20262f">Fiberglass Insulation</div>
<div class="t" style="left:334px;top:383.7px;font-size:10.8px;color:#20262f">PROD031</div>
<div class="abs" style="left:513.2px;top:379.4px;width:148.8px;height:18px;border:1px solid #93b9a6;border-radius:3px;background:#f8fafa;color:#1a5431;font-size:10.8px;font-weight:700;text-align:center;line-height:16.5px">Product</div>
<div class="abs" style="left:694px;top:381.0px;width:163px;height:16px;overflow:hidden"><div class="t" style="left:0;top:2.0px;font-size:11.7px;color:#20262f">Material for thermal insulation</div></div>
<div class="t" style="right:345.5px;top:383.9px;font-size:11px;color:#20262f">0.80</div>
<div class="t" style="right:165.5px;top:383.9px;font-size:11px;color:#20262f">0.88</div>
<div class="abs" style="left:0;top:403.4px;width:1367px;height:28.8px;background:#dfe2fa;border-bottom:1px solid #e9ecf1"></div>
<div class="abs" style="left:15px;top:411.19999999999993px;width:14px;height:14px;border-radius:2px;background:#3347e0"></div>
<svg class="abs" style="left:15px;top:411.19999999999993px" width="14" height="14" viewBox="0 0 14 14"><path d="M3 7.2 L5.8 10 L11 4.2" fill="none" stroke="#fff" stroke-width="1.6"/></svg>
<svg class="abs" style="left:82px;top:409.99999999999994px" width="20" height="14" viewBox="0 0 20 14"><rect width="20" height="14" rx="2" fill="#d3d8e8"/><path d="M3.8 11.4 L6.4 7.9 L8.4 10.2 L12 6.2 L15.7 11.4 Z" fill="#fff" stroke="#fff" stroke-width="0.5" stroke-linejoin="round"/></svg>
<div class="t" style="left:154px;top:412.29999999999995px;font-size:11.3px;color:#20262f">Foam Sealant</div>
<div class="t" style="left:334px;top:412.49999999999994px;font-size:10.8px;color:#20262f">PROD032</div>
<div class="abs" style="left:513.2px;top:408.19999999999993px;width:148.8px;height:18px;border:1px solid #93b9a6;border-radius:3px;background:#f8fafa;color:#1a5431;font-size:10.8px;font-weight:700;text-align:center;line-height:16.5px">Product</div>
<div class="abs" style="left:694px;top:409.79999999999995px;width:163px;height:16px;overflow:hidden"><div class="t" style="left:0;top:2.0px;font-size:11.7px;color:#20262f">Sealant for gaps and cracks</div></div>
<div class="t" style="right:345.5px;top:412.69999999999993px;font-size:11px;color:#20262f">5.00</div>
<div class="t" style="right:165.5px;top:412.69999999999993px;font-size:11px;color:#20262f">5.50</div>
<div class="abs" style="left:0;top:432.2px;width:1367px;height:28.8px;background:#f7f9fb;border-bottom:1px solid #e9ecf1"></div>
<div class="abs" style="left:15px;top:439.99999999999994px;width:13.5px;height:13.5px;border-radius:2px;border:1.8px solid #575d69;background:transparent"></div>
<svg class="abs" style="left:82px;top:438.79999999999995px" width="20" height="14" viewBox="0 0 20 14"><rect width="20" height="14" rx="2" fill="#cfd4dc"/><path d="M3.8 11.4 L6.4 7.9 L8.4 10.2 L12 6.2 L15.7 11.4 Z" fill="#fff" stroke="#fff" stroke-width="0.5" stroke-linejoin="round"/></svg>
<div class="t" style="left:154px;top:441.09999999999997px;font-size:11.3px;color:#20262f">Full Area HVAC System, Pi...</div>
<div class="t" style="left:334px;top:441.29999999999995px;font-size:10.8px;color:#20262f">2822/CM81AW</div>
<div class="abs" style="left:513.2px;top:436.99999999999994px;width:148.8px;height:18px;border:1px solid #93b9a6;border-radius:3px;background:#f8fafa;color:#1a5431;font-size:10.8px;font-weight:700;text-align:center;line-height:16.5px">Product</div>
<div class="t" style="right:345.5px;top:441.49999999999994px;font-size:11px;color:#20262f">£0.00</div>
<div class="t" style="right:165.5px;top:441.49999999999994px;font-size:11px;color:#20262f">£0.00</div>
<div class="abs" style="left:0;top:461.0px;width:1367px;height:28.8px;background:#f7f9fb;border-bottom:1px solid #e9ecf1"></div>
<div class="abs" style="left:15px;top:468.79999999999995px;width:13.5px;height:13.5px;border-radius:2px;border:1.8px solid #575d69;background:transparent"></div>
<svg class="abs" style="left:82px;top:467.59999999999997px" width="20" height="14" viewBox="0 0 20 14"><rect width="20" height="14" rx="2" fill="#cfd4dc"/><path d="M3.8 11.4 L6.4 7.9 L8.4 10.2 L12 6.2 L15.7 11.4 Z" fill="#fff" stroke="#fff" stroke-width="0.5" stroke-linejoin="round"/></svg>
<div class="t" style="left:154px;top:469.9px;font-size:11.3px;color:#20262f">Furnaces</div>
<div class="t" style="left:334px;top:470.09999999999997px;font-size:10.8px;color:#20262f">PROD002</div>
<div class="abs" style="left:513.2px;top:465.79999999999995px;width:148.8px;height:18px;border:1px solid #93b9a6;border-radius:3px;background:#f8fafa;color:#1a5431;font-size:10.8px;font-weight:700;text-align:center;line-height:16.5px">Product</div>
<div class="abs" style="left:694px;top:467.4px;width:163px;height:16px;overflow:hidden"><div class="t" style="left:0;top:2.0px;font-size:11.7px;color:#20262f">Devices to heat air for distribution</div></div>
<div class="t" style="right:345.5px;top:470.29999999999995px;font-size:11px;color:#20262f">2,000.00</div>
<div class="t" style="right:165.5px;top:470.29999999999995px;font-size:11px;color:#20262f">2,200.00</div>
<div class="abs" style="left:0;top:489.8px;width:1367px;height:28.8px;background:#f7f9fb;border-bottom:1px solid #e9ecf1"></div>
<div class="abs" style="left:15px;top:497.59999999999997px;width:13.5px;height:13.5px;border-radius:2px;border:1.8px solid #575d69;background:transparent"></div>
<svg class="abs" style="left:82px;top:496.4px" width="20" height="14" viewBox="0 0 20 14"><rect width="20" height="14" rx="2" fill="#cfd4dc"/><path d="M3.8 11.4 L6.4 7.9 L8.4 10.2 L12 6.2 L15.7 11.4 Z" fill="#fff" stroke="#fff" stroke-width="0.5" stroke-linejoin="round"/></svg>
<div class="t" style="left:154px;top:498.7px;font-size:11.3px;color:#20262f">Leak Detector</div>
<div class="t" style="left:334px;top:498.9px;font-size:10.8px;color:#20262f">PROD029</div>
<div class="abs" style="left:513.2px;top:494.59999999999997px;width:148.8px;height:18px;border:1px solid #93b9a6;border-radius:3px;background:#f8fafa;color:#1a5431;font-size:10.8px;font-weight:700;text-align:center;line-height:16.5px">Product</div>
<div class="abs" style="left:694px;top:496.2px;width:163px;height:16px;overflow:hidden"><div class="t" style="left:0;top:2.0px;font-size:11.7px;color:#20262f">Device to detect leaks in systems</div></div>
<div class="t" style="right:345.5px;top:499.09999999999997px;font-size:11px;color:#20262f">60.00</div>
<div class="t" style="right:165.5px;top:499.09999999999997px;font-size:11px;color:#20262f">66.00</div>
<div class="abs" style="left:0;top:518.5999999999999px;width:1367px;height:28.8px;background:#f7f9fb;border-bottom:1px solid #e9ecf1"></div>
<div class="abs" style="left:15px;top:526.3999999999999px;width:13.5px;height:13.5px;border-radius:2px;border:1.8px solid #575d69;background:transparent"></div>
<svg class="abs" style="left:82px;top:525.1999999999999px" width="20" height="14" viewBox="0 0 20 14"><rect width="20" height="14" rx="2" fill="#cfd4dc"/><path d="M3.8 11.4 L6.4 7.9 L8.4 10.2 L12 6.2 L15.7 11.4 Z" fill="#fff" stroke="#fff" stroke-width="0.5" stroke-linejoin="round"/></svg>
<div class="t" style="left:154px;top:527.4999999999999px;font-size:11.3px;color:#20262f">Pipe Cutter</div>
<div class="t" style="left:334px;top:527.6999999999999px;font-size:10.8px;color:#20262f">PROD016</div>
<div class="abs" style="left:513.2px;top:523.3999999999999px;width:148.8px;height:18px;border:1px solid #93b9a6;border-radius:3px;background:#f8fafa;color:#1a5431;font-size:10.8px;font-weight:700;text-align:center;line-height:16.5px">Product</div>
<div class="abs" style="left:694px;top:524.9999999999999px;width:163px;height:16px;overflow:hidden"><div class="t" style="left:0;top:2.0px;font-size:11.7px;color:#20262f">Tool for cutting pipes</div></div>
<div class="t" style="right:345.5px;top:527.8999999999999px;font-size:11px;color:#20262f">30.00</div>
<div class="t" style="right:165.5px;top:527.8999999999999px;font-size:11px;color:#20262f">33.00</div>
<div class="abs" style="left:0;top:547.4000000000001px;width:1367px;height:28.8px;background:#f7f9fb;border-bottom:1px solid #e9ecf1"></div>
<div class="abs" style="left:15px;top:555.2px;width:13.5px;height:13.5px;border-radius:2px;border:1.8px solid #575d69;background:transparent"></div>
<svg class="abs" style="left:82px;top:554.0000000000001px" width="20" height="14" viewBox="0 0 20 14"><rect width="20" height="14" rx="2" fill="#cfd4dc"/><path d="M3.8 11.4 L6.4 7.9 L8.4 10.2 L12 6.2 L15.7 11.4 Z" fill="#fff" stroke="#fff" stroke-width="0.5" stroke-linejoin="round"/></svg>
<div class="t" style="left:154px;top:556.3000000000001px;font-size:11.3px;color:#20262f">Pressure Gauges</div>
<div class="t" style="left:334px;top:556.5000000000001px;font-size:10.8px;color:#20262f">PROD010</div>
<div class="abs" style="left:513.2px;top:552.2px;width:148.8px;height:18px;border:1px solid #93b9a6;border-radius:3px;background:#f8fafa;color:#1a5431;font-size:10.8px;font-weight:700;text-align:center;line-height:16.5px">Product</div>
<div class="abs" style="left:694px;top:553.8000000000001px;width:163px;height:16px;overflow:hidden"><div class="t" style="left:0;top:2.0px;font-size:11.7px;color:#20262f">Devices to measure fluid pressure</div></div>
<div class="t" style="right:345.5px;top:556.7px;font-size:11px;color:#20262f">20.00</div>
<div class="t" style="right:165.5px;top:556.7px;font-size:11px;color:#20262f">22.00</div>
<div class="abs" style="left:0;top:576.2px;width:1367px;height:28.8px;background:#f7f9fb;border-bottom:1px solid #e9ecf1"></div>
<div class="abs" style="left:15px;top:584.0px;width:13.5px;height:13.5px;border-radius:2px;border:1.8px solid #575d69;background:transparent"></div>
<svg class="abs" style="left:82px;top:582.8000000000001px" width="20" height="14" viewBox="0 0 20 14"><rect width="20" height="14" rx="2" fill="#cfd4dc"/><path d="M3.8 11.4 L6.4 7.9 L8.4 10.2 L12 6.2 L15.7 11.4 Z" fill="#fff" stroke="#fff" stroke-width="0.5" stroke-linejoin="round"/></svg>
<div class="t" style="left:154px;top:585.1px;font-size:11.3px;color:#20262f">Pressure Meter</div>
<div class="t" style="left:334px;top:585.3000000000001px;font-size:10.8px;color:#20262f">PROD028</div>
<div class="abs" style="left:513.2px;top:581.0px;width:148.8px;height:18px;border:1px solid #93b9a6;border-radius:3px;background:#f8fafa;color:#1a5431;font-size:10.8px;font-weight:700;text-align:center;line-height:16.5px">Product</div>
<div class="abs" style="left:694px;top:582.6px;width:163px;height:16px;overflow:hidden"><div class="t" style="left:0;top:2.0px;font-size:11.7px;color:#20262f">Device to measure fluid pressure</div></div>
<div class="t" style="right:345.5px;top:585.5px;font-size:11px;color:#20262f">40.00</div>
<div class="t" style="right:165.5px;top:585.5px;font-size:11px;color:#20262f">44.00</div>
<div class="abs" style="left:0;top:605.0px;width:1367px;height:28.8px;background:#f7f9fb;border-bottom:1px solid #e9ecf1"></div>
<div class="abs" style="left:15px;top:612.8px;width:13.5px;height:13.5px;border-radius:2px;border:1.8px solid #575d69;background:transparent"></div>
<svg class="abs" style="left:82px;top:611.6px" width="20" height="14" viewBox="0 0 20 14"><rect width="20" height="14" rx="2" fill="#cfd4dc"/><path d="M3.8 11.4 L6.4 7.9 L8.4 10.2 L12 6.2 L15.7 11.4 Z" fill="#fff" stroke="#fff" stroke-width="0.5" stroke-linejoin="round"/></svg>
<div class="t" style="left:154px;top:613.9px;font-size:11.3px;color:#20262f">Programmable Thermostats</div>
<div class="t" style="left:334px;top:614.1px;font-size:10.8px;color:#20262f">PROD011</div>
<div class="abs" style="left:513.2px;top:609.8px;width:148.8px;height:18px;border:1px solid #93b9a6;border-radius:3px;background:#f8fafa;color:#1a5431;font-size:10.8px;font-weight:700;text-align:center;line-height:16.5px">Product</div>
<div class="abs" style="left:694px;top:611.4px;width:163px;height:16px;overflow:hidden"><div class="t" style="left:0;top:2.0px;font-size:11.7px;color:#20262f">Devices to control HVAC temperature</div></div>
<div class="t" style="right:345.5px;top:614.3px;font-size:11px;color:#20262f">150.00</div>
<div class="t" style="right:165.5px;top:614.3px;font-size:11px;color:#20262f">165.00</div>
</div>
<div class="abs" style="left:363px;top:313px;width:1px;height:635px;background:#e6e9ef"></div>
<div class="abs" style="left:1685px;top:313px;width:15px;height:635px;background:#fafbfc;border-left:1px solid #eef0f3"></div>
<div class="abs" style="left:1689px;top:316px;width:8px;height:527px;border-radius:4px;background:#bdbdbd"></div>
<div class="abs" style="left:318px;top:933px;width:1367px;height:15px;background:#f8f9fa;border-top:1px solid #e3e7ec"></div>
<div class="abs" style="left:367px;top:937px;width:711px;height:8px;border-radius:4px;background:#bdbdbd"></div>
<div class="abs" style="left:317px;top:947.5px;width:1411px;height:44.5px;background:#f1f4f9;border-top:1px solid #dfe4ec"></div>
<div class="t" style="left:1418px;top:964px;font-size:11.7px;color:#232a36"><b>1</b> to <b>25</b> of <b>35</b></div>
<div class="abs" style="left:1522px;top:959.5px;width:20.5px;height:20.5px;border-radius:3px;border:1px solid #e9ecf1"></div>
<svg style="position:absolute;left:1525px;top:963px" width="14" height="14" viewBox="0 0 24 24"><path fill="#a6adb8" d="M18.41 16.59L13.82 12l4.59-4.59L17 6l-6 6 6 6zM6 6h2v12H6z"/></svg>
<div class="abs" style="left:1553.5px;top:959.5px;width:20.5px;height:20.5px;border-radius:3px;border:1px solid #e9ecf1"></div>
<svg style="position:absolute;left:1556.5px;top:963px" width="14" height="14" viewBox="0 0 24 24"><path fill="#a6adb8" d="M15.41 7.41L14 6l-6 6 6 6 1.41-1.41L10.83 12z"/></svg>
<div class="t" style="left:1585.5px;top:964px;font-size:11.2px;color:#232a36">Page <b>1</b> of <b>2</b></div>
<div class="abs" style="left:1654px;top:959.5px;width:19.5px;height:20.5px;border-radius:3px;background:#fff"></div>
<svg style="position:absolute;left:1657px;top:963px" width="14" height="14" viewBox="0 0 24 24"><path fill="#1b2230" d="M10 6L8.59 7.41 13.17 12l-4.58 4.59L10 18l6-6z"/></svg>
<div class="abs" style="left:1685.5px;top:959.5px;width:19.5px;height:20.5px;border-radius:3px;background:#fff"></div>
<svg style="position:absolute;left:1688.5px;top:963px" width="14" height="14" viewBox="0 0 24 24"><path fill="#1b2230" d="M5.59 7.41L10.18 12l-4.59 4.59L7 18l6-6-6-6zM16 6h2v12h-2z"/></svg>
<div class="abs" style="left:1727px;top:948px;width:1px;height:44px;background:#e3e7ee"></div>
<div class="abs" style="left:317px;top:991px;width:1411px;height:1px;background:#e3e7ee"></div>
<div class="abs" style="left:318px;top:934px;width:45px;height:14px;background:#fbfcfd"></div>
<div class="abs" style="left:1700px;top:227px;width:28px;height:721px;background:#fff;border-left:1px solid #e6e9ee"></div>
<svg style="position:absolute;left:1707.3px;top:265px" width="15" height="15" viewBox="0 0 24 24"><path fill="#1b2230" d="M10 18h5V5h-5v13zm-6 0h5V5H4v13zM16 5v13h5V5h-5z"/></svg>
<div class="t" style="left:1708.5px;top:284.5px;font-size:11.3px;color:#262d38;writing-mode:vertical-rl">Columns</div>
<svg style="position:absolute;left:1707.5px;top:370px" width="14" height="14" viewBox="0 0 24 24"><path fill="#1b2230" d="M4.25 5.61C6.27 8.2 10 13 10 13v6c0 .55.45 1 1 1h2c.55 0 1-.45 1-1v-6s3.72-4.8 5.74-7.39c.51-.66.04-1.61-.79-1.61H5.04c-.83 0-1.3.95-.79 1.61z"/></svg>
<div class="t" style="left:1708.5px;top:388px;font-size:11.3px;color:#262d38;writing-mode:vertical-rl">Filters</div>
</body></html>
